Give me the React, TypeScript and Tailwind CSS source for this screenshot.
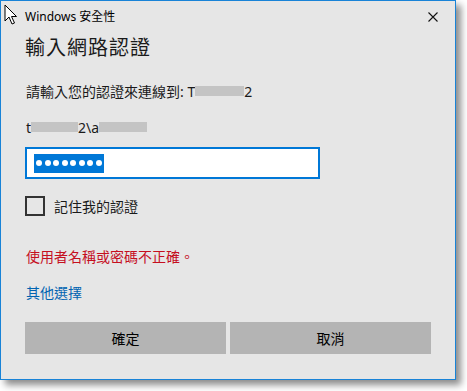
const FONT = { fontFamily: '"Segoe UI", "Noto Sans", "Noto Sans CJK TC", sans-serif' };

function Redacted({ w }: { w: number }) {
  return <span className="inline-block h-[10px] bg-[#c4c4c4]" style={{ width: w }} />;
}

export default function App() {
  return (
    <div className="relative w-[467px] h-[391px] bg-white overflow-hidden" style={FONT}>
      <div className="w-[456px] h-[380px] border border-[#1883d7] bg-[#e6e6e6] shadow-[5px_5px_7px_rgba(0,0,0,0.45)] flex flex-col pl-[24px] text-[#1a1a1a]">
        {/* title bar */}
        <div className="h-[31px] flex items-center justify-between pr-[17px]">
          <span className="text-[12px] text-black">Windows 安全性</span>
          <svg width="10" height="10" viewBox="0 0 10 10">
            <path d="M0.5 0.5 L9.5 9.5 M9.5 0.5 L0.5 9.5" stroke="#111" strokeWidth="1.1" />
          </svg>
        </div>
        <div className="h-[32px] flex items-center text-[20px] text-[#1a1a1a] tracking-[1px]">輸入網路認證</div>

        <div className="mt-[17px] h-[20px] flex items-center text-[14px] pl-[1px]">
          <span>請輸入您的認證來連線到: T</span>
          <Redacted w={49} />
          <span>2</span>
        </div>
        <div className="mt-[16px] h-[20px] flex items-center text-[14px] pl-[1px]">
          <span>t</span>
          <Redacted w={47} />
          <span>2\a</span>
          <Redacted w={48} />
        </div>

        <div className="mt-[10px] w-[295px] h-[32px] border-2 border-[#0078d7] bg-white flex items-center pl-[7px]">
          <div className="h-[19px] bg-[#0078d7] flex items-center gap-[2.5px] px-[2px]">
            {Array.from({ length: 8 }).map((_, i) => (
              <span key={i} className="w-[6px] h-[6px] rounded-full bg-white" />
            ))}
          </div>
        </div>

        <div className="mt-[17px] h-[20px] flex items-center gap-[9px]">
          <span className="w-[20px] h-[20px] border-2 border-[#333333]" />
          <span className="text-[14px]">記住我的認證</span>
        </div>

        <div className="mt-[30px] h-[20px] flex items-center text-[14px] text-[#c50f1f] pl-[1px]">
          使用者名稱或密碼不正確。
        </div>
        <div className="mt-[16px] h-[20px] flex items-center text-[14px] text-[#0063b1] pl-[1px]">其他選擇</div>

        <div className="mt-[20px] flex gap-[4px]">
          <button className="w-[201px] h-[32px] bg-[#b4b4b4] text-[14px] text-black">確定</button>
          <button className="w-[201px] h-[32px] bg-[#b4b4b4] text-[14px] text-black">取消</button>
        </div>
      </div>

      {/* mouse pointer */}
      <svg className="absolute left-[4px] top-[4px]" width="14" height="22" viewBox="0 0 14 22">
        <path d="M1 1 L1 17 L5 13 L8 20 L10.5 19 L7.5 12.5 L12.5 12.5 Z" fill="white" stroke="black" strokeWidth="1" strokeLinejoin="round" />
      </svg>
    </div>
  );
}
